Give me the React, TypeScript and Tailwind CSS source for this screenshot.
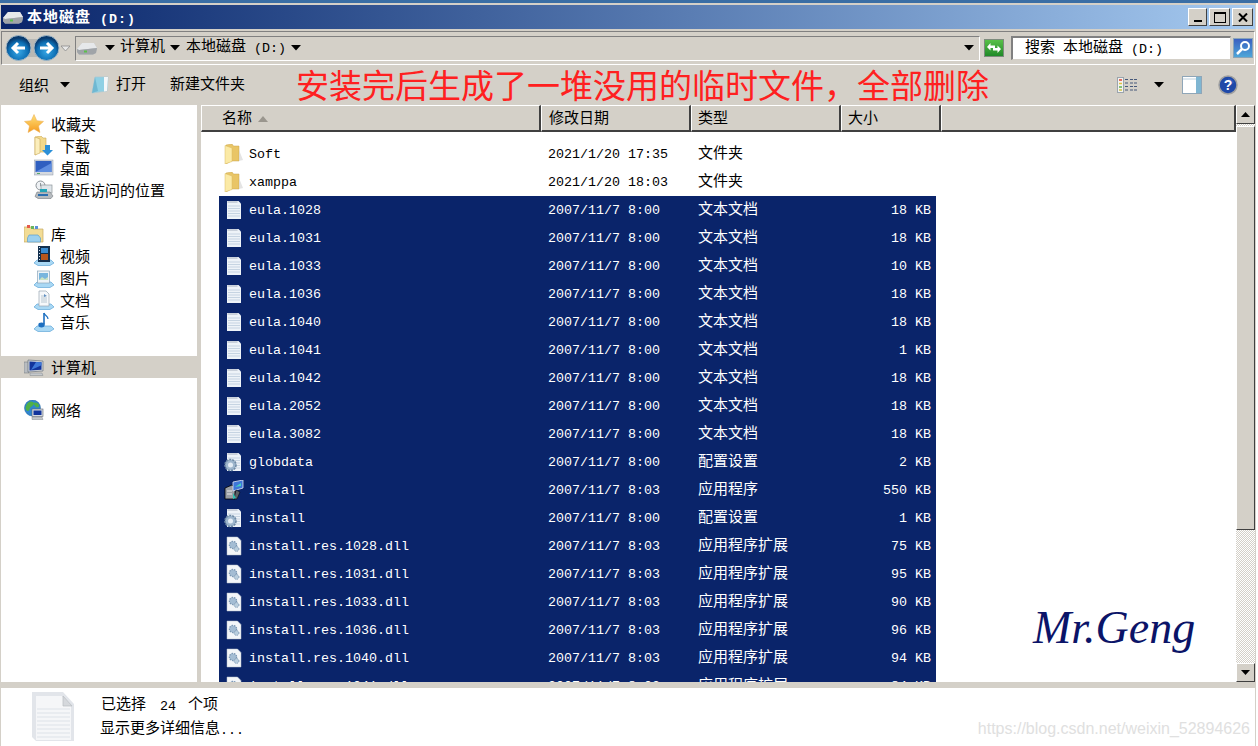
import type { ReactNode } from 'react';

const bevel = 'border border-t-white border-l-white border-r-[#404040] border-b-[#404040] bg-[#d4d0c8]';
const dither = 'bg-[repeating-conic-gradient(#d4d0c8_0_25%,#ffffff_0_50%)] bg-[length:2px_2px]';

// CJK runs sit at 15px, Latin at the mono size of the root, like the old system font
function T({ s }: { s: string }) {
  return (
    <>
      {s
        .split(/([\u3000-\u9fff\uff00-\uffef]+)/)
        .filter(Boolean)
        .map((part, i) =>
          /[\u3000-\u9fff\uff00-\uffef]/.test(part) ? (
            <span key={i} className="inline-block -translate-y-px text-[15px] leading-none font-['Noto_Sans_CJK_SC',sans-serif]">
              {part}
            </span>
          ) : (
            <span key={i}>{part}</span>
          ),
        )}
    </>
  );
}

function Caret({ className = '' }: { className?: string }) {
  return (
    <svg width="10" height="6" viewBox="0 0 10 6" className={`shrink-0 ${className}`}>
      <path d="M0 0h10L5 5.500z" fill="#000" />
    </svg>
  );
}

function Drive({ w = 20 }: { w?: number }) {
  return (
    <svg width={w} height={w * 0.65} viewBox="0 0 20 13" className="shrink-0">
      <path d="M5 1h12l3 5-1 5-3 1.500H2L0 10V7z" fill="#b9bcbf" />
      <path d="M5 1h12l3 5L2 8 0 7z" fill="#e6e8ea" />
      <path d="M0 7l2 1 18-2-1 5-3 1.500H2L0 10z" fill="#a0a4a8" />
      <rect x="7" y="8.500" width="3" height="2" fill="#5cc04a" />
    </svg>
  );
}

function NavButtons() {
  return (
    <svg width="66" height="28" viewBox="0 0 66 28" className="shrink-0">
      <defs>
        <radialGradient id="nav" cx="50%" cy="65%" r="55%">
          <stop offset="0" stopColor="#37a7e6" />
          <stop offset="0.7" stopColor="#0d6fb4" />
          <stop offset="1" stopColor="#083a6e" />
        </radialGradient>
      </defs>
      <rect x="12" y="5" width="34" height="18" fill="#b8b8b4" />
      <circle cx="13.500" cy="14" r="12.500" fill="url(#nav)" stroke="#9fb6c6" />
      <circle cx="41.500" cy="14" r="12.500" fill="url(#nav)" stroke="#9fb6c6" />
      <path d="M20 14H8M13 9l-5 5 5 5" fill="none" stroke="#fff" strokeWidth="3" />
      <path d="M35 14h12M42 9l5 5-5 5" fill="none" stroke="#fff" strokeWidth="3" />
      <path d="M56 12h9l-4.500 5z" fill="#e8e8e8" stroke="#8a8a8a" strokeWidth="0.8" />
    </svg>
  );
}

function Tray() {
  return <path d="M3 14h14l3 3-4 2.500H4L0 17z" fill="#a9d8f4" stroke="#62a8d8" strokeWidth="0.7" />;
}

function NavIcon({ name }: { name: string }) {
  return (
    <svg width="20" height="20" viewBox="0 0 20 20" className="shrink-0">
      {name === 'star' && (
        <>
          <defs>
            <linearGradient id="star" x1="0" y1="0" x2="0" y2="1">
              <stop offset="0" stopColor="#ffe27a" />
              <stop offset="1" stopColor="#f59a1e" />
            </linearGradient>
          </defs>
          <path d="M10 0.500l2.800 6.200 6.700.7-5 4.500 1.400 6.600L10 15l-5.900 3.500 1.400-6.600-5-4.500 6.700-.7z" fill="url(#star)" stroke="#e9a94a" strokeWidth="0.5" />
        </>
      )}
      {name === 'download' && (
        <>
          <path d="M1 1l6-1 2 2h3v14H5l-4 3z" fill="#f3d98b" stroke="#c9a858" strokeWidth="0.6" />
          <path d="M1 1l5 2v14l-5 2z" fill="#fbeebc" stroke="#c9a858" strokeWidth="0.6" />
          <path d="M11 9h5v5h3l-5.500 5.500L8 14h3z" fill="#2b8fd8" />
        </>
      )}
      {name === 'desktop' && (
        <>
          <rect x="0" y="2" width="19" height="15" fill="#d5d9df" stroke="#8d98a8" strokeWidth="0.5" />
          <rect x="1.500" y="3" width="16" height="11" fill="#2f5fc0" />
          <path d="M1.500 14L17.500 5v9z" fill="#5f8ee0" />
          <rect x="3" y="15" width="3" height="1" fill="#5cab6a" />
        </>
      )}
      {name === 'recent' && (
        <>
          <circle cx="6.500" cy="5.500" r="4.500" fill="#eef1f4" stroke="#8d9499" />
          <path d="M6.500 3v3h2.500" fill="none" stroke="#7a8186" strokeWidth="0.8" />
          <rect x="7" y="5" width="11" height="8" fill="#dfe5ea" stroke="#8d9499" strokeWidth="0.7" />
          <path d="M3 12h13l3 4-2 2.500H4l-3-2z" fill="#b6bbbf" stroke="#74797d" strokeWidth="0.6" />
          <path d="M6 9h7v3H6z" fill="#23a6b8" />
          <path d="M4 14h10v2H4z" fill="#2b6fb0" />
        </>
      )}
      {name === 'library' && (
        <>
          <path d="M0 3h7l2 2h10v13H0z" fill="#f2dc95" stroke="#c6ab62" strokeWidth="0.7" />
          <rect x="3" y="1" width="3" height="3" fill="#e65a4a" />
          <rect x="7" y="2" width="3" height="3" fill="#68b45c" />
          <rect x="11" y="2" width="3" height="3" fill="#5b8fd8" />
          <path d="M5 11h9l2.500 3v4h-13v-4z" fill="#9cd0ee" stroke="#5d9fcb" strokeWidth="0.7" />
        </>
      )}
      {name === 'video' && (
        <>
          <Tray />
          <rect x="4" y="0" width="12" height="16" fill="#13304f" />
          <rect x="7" y="2" width="7" height="5" fill="#3a8bd0" />
          <rect x="7" y="8" width="7" height="6" fill="#b8561c" />
          <path d="M5 1.500h1M5 4.500h1M5 7.500h1M5 10.500h1M5 13.500h1" stroke="#d7e5f0" strokeWidth="1.200" />
        </>
      )}
      {name === 'picture' && (
        <>
          <Tray />
          <rect x="3.500" y="3" width="12" height="12" fill="#eef4f8" stroke="#8ba6bb" strokeWidth="0.7" />
          <rect x="5" y="5" width="9" height="7" fill="#79b6de" />
          <path d="M5 12l3-3 3 2 3-2v3z" fill="#cbe3c3" />
        </>
      )}
      {name === 'document' && (
        <>
          <Tray />
          <path d="M5 1h7l3 3v12H5z" fill="#f6f8fa" stroke="#98a7b3" strokeWidth="0.7" />
          <path d="M7 6h3M7 8h6M7 10h6M7 12h6" stroke="#a9bac7" strokeWidth="0.8" />
          <path d="M10 4l3 2-3 1z" fill="#5f8ec0" />
        </>
      )}
      {name === 'music' && (
        <>
          <Tray />
          <path d="M10 1v11.500" stroke="#1d6fc0" strokeWidth="1.600" fill="none" />
          <path d="M10 1c1 3 4 3 4 6" stroke="#1d6fc0" strokeWidth="1.200" fill="none" />
          <ellipse cx="7.500" cy="13" rx="3.200" ry="2.400" fill="#1d6fc0" />
        </>
      )}
      {name === 'computer' && (
        <>
          <rect x="0" y="5" width="5" height="11" fill="#b8bcc0" stroke="#6d7378" strokeWidth="0.5" />
          <path d="M4 3l15 1v10l-15 1z" fill="#cfd4da" stroke="#5c6470" strokeWidth="0.6" />
          <path d="M5.500 4.500l12 .7v7.600l-12 .7z" fill="#12349c" />
          <path d="M7 13l5-8 5.500.3v3z" fill="#3f78d8" />
          <path d="M6 16h12l1 2.500H6z" fill="#c4c8cc" stroke="#858a8f" strokeWidth="0.5" />
        </>
      )}
      {name === 'network' && (
        <>
          <circle cx="8.500" cy="8" r="8" fill="#2f86cf" stroke="#1f5f9c" strokeWidth="0.5" />
          <path d="M2 6c2-5 5-5 7-4s0 4-2 5-1 4-3 4-3-3-2-5zM10 3c2-1 4 0 5 2s-2 3-3 2-3-3-2-4z" fill="#4fb048" />
          <rect x="8" y="9" width="11" height="7.500" fill="#d6dae0" stroke="#5c6470" strokeWidth="0.6" />
          <rect x="9.500" y="10.500" width="8" height="4.500" fill="#12349c" />
          <path d="M8 17h10l1 2.500H8z" fill="#c4c8cc" stroke="#858a8f" strokeWidth="0.5" />
        </>
      )}
    </svg>
  );
}

function FileIcon({ kind }: { kind: string }) {
  return (
    <svg width="20" height="20" viewBox="0 0 20 20" className="shrink-0">
      {kind === 'folder' && (
        <>
          <path d="M2 1l6-1 1.500 2H15v15H7l-5 3z" fill="#e9c566" stroke="#c9a44d" strokeWidth="0.5" />
          <path d="M1 1.500L8 4v13.500l-7 2.500z" fill="#fbeaa6" stroke="#d9bb63" strokeWidth="0.5" />
          <path d="M15 6l4 10-4 1z" fill="#d8d8d8" opacity="0.7" />
        </>
      )}
      {(kind === 'text' || kind === 'config') && (
        <>
          <path d="M3 1h11.500L17 3.500V19H3z" fill="#eef3f8" />
          <path d="M4 2h10M4 1v2M6 1v2M8 1v2M10 1v2M12 1v2" stroke="#a8b4c0" strokeWidth="0.6" />
          <path d="M4 6h12M4 8.500h12M4 11h12M4 13.500h12M4 16h12" stroke="#c6d4e2" strokeWidth="1.200" />
          {kind === 'config' && (
            <>
              <circle cx="6.500" cy="13" r="5.500" fill="#9db6cd" stroke="#6f8aa5" strokeWidth="1.600" strokeDasharray="2 1" />
              <circle cx="6.500" cy="13" r="2.500" fill="#e4edf5" />
            </>
          )}
        </>
      )}
      {kind === 'app' && (
        <>
          <path d="M1 8l7-3 3 3v11H1z" fill="#9a9ea4" stroke="#000" strokeWidth="0.8" />
          <path d="M3 11h5M3 14h5" stroke="#e8e8e8" strokeWidth="1" />
          <path d="M9 2l10-2v8l-10 3z" fill="#3f76d8" stroke="#dfe4f5" strokeWidth="0.8" />
          <path d="M11 7l6-4v3z" fill="#45d0c0" />
          <path d="M12 10l4 2-3 7h-3z" fill="#5d6168" stroke="#000" strokeWidth="0.5" />
          <path d="M9 13l3 5-3 1z" fill="#30c0b0" />
        </>
      )}
      {kind === 'dll' && (
        <>
          <path d="M3 1h10.500L17 4.500V19H3z" fill="#f3f6f9" stroke="#b5bec8" strokeWidth="0.5" />
          <circle cx="9" cy="9" r="3.600" fill="#a4bdd4" stroke="#7b97b3" strokeWidth="1.300" strokeDasharray="1.500 1" />
          <circle cx="12.500" cy="13" r="2.400" fill="#b9cede" stroke="#7b97b3" strokeWidth="1" strokeDasharray="1 0.800" />
        </>
      )}
    </svg>
  );
}

type FileRow = { name: string; date: string; type: string; size: string; kind: string; selected?: boolean };

const eulaSizes: [string, string][] = [
  ['1028', '18'], ['1031', '18'], ['1033', '10'], ['1036', '18'], ['1040', '18'],
  ['1041', '1'], ['1042', '18'], ['2052', '18'], ['3082', '18'],
];
const dllSizes: [string, string][] = [['1028', '75'], ['1031', '95'], ['1033', '90'], ['1036', '96'], ['1040', '94'], ['1041', '84']];

const files: FileRow[] = [
  { name: 'Soft', date: '2021/1/20 17:35', type: '文件夹', size: '', kind: 'folder' },
  { name: 'xamppa', date: '2021/1/20 18:03', type: '文件夹', size: '', kind: 'folder' },
  ...eulaSizes.map(([id, size]) => ({ name: `eula.${id}`, date: '2007/11/7 8:00', type: '文本文档', size: `${size} KB`, kind: 'text', selected: true })),
  { name: 'globdata', date: '2007/11/7 8:00', type: '配置设置', size: '2 KB', kind: 'config', selected: true },
  { name: 'install', date: '2007/11/7 8:03', type: '应用程序', size: '550 KB', kind: 'app', selected: true },
  { name: 'install', date: '2007/11/7 8:00', type: '配置设置', size: '1 KB', kind: 'config', selected: true },
  ...dllSizes.map(([id, size]) => ({ name: `install.res.${id}.dll`, date: '2007/11/7 8:03', type: '应用程序扩展', size: `${size} KB`, kind: 'dll', selected: true })),
];

function NavRow({ icon, label, child, active }: { icon: string; label: string; child?: boolean; active?: boolean }) {
  return (
    <div className={`flex h-[22px] items-center ${child ? 'pl-[33px] gap-[6px]' : 'pl-[23px] gap-[7px]'} ${active ? 'bg-[#d4d0c8]' : ''}`}>
      <NavIcon name={icon} />
      <T s={label} />
    </div>
  );
}

function HeaderCell({ width, children }: { width: string; children?: ReactNode }) {
  return (
    <div className={`${width} flex h-full shrink-0 items-center border-t border-l border-t-white border-l-white border-r-2 border-b-2 border-r-[#404040] border-b-[#404040] pt-[2px]`}>
      {children}
    </div>
  );
}

function WinButton({ children, className = '' }: { children: ReactNode; className?: string }) {
  return <div className={`${bevel} ${className} flex h-[18px] items-center justify-center`}>{children}</div>;
}

function ScrollButton({ up }: { up?: boolean }) {
  return (
    <div className={`${bevel} flex h-[19px] shrink-0 items-center justify-center`}>
      <svg width="9" height="5" viewBox="0 0 9 5">
        <path d={up ? 'M0 5h9L4.500 0z' : 'M0 0h9L4.500 5z'} fill="#000" />
      </svg>
    </div>
  );
}

export default function App() {
  return (
    <div className="flex h-[746px] w-[1258px] flex-col overflow-hidden bg-white text-[13.33px] leading-none text-black font-['Liberation_Mono','Noto_Sans_CJK_SC',monospace]">
      <div className="h-[3px] shrink-0 bg-[#3a6ea5]" />
      <div className="mr-[2px] flex min-h-0 flex-1 flex-col border-l border-r border-[#d4d0c8] bg-[#d4d0c8]">
        {/* title bar */}
        <div className="mt-[2px] flex h-[24px] shrink-0 items-center bg-gradient-to-r from-[#0a246a] to-[#a6caf0] px-[2px] font-bold text-white">
          <Drive />
          <div className="ml-[4px] pt-[2px] tracking-[1px] whitespace-pre">
            <T s="本地磁盘 (D:)" />
          </div>
          <div className="ml-auto flex gap-[2px]">
            <WinButton className="w-[19px] items-end pb-[3px]">
              <div className="h-[2px] w-[8px] bg-black" />
            </WinButton>
            <WinButton className="w-[21px]">
              <div className="h-[11px] w-[12px] border border-t-2 border-black" />
            </WinButton>
            <WinButton className="w-[21px]">
              <svg width="10" height="9" viewBox="0 0 10 9">
                <path d="M1 .5l8 8M9 .5l-8 8" stroke="#000" strokeWidth="2" />
              </svg>
            </WinButton>
          </div>
        </div>

        {/* address row */}
        <div className="mt-[2px] flex h-[34px] shrink-0 items-center border border-t-[#808080] border-b-white border-l-[#808080] border-r-white pl-[3px] whitespace-pre">
          <NavButtons />
          <div className="ml-[4px] flex h-[25px] w-[905px] shrink-0 items-center border border-t-[#808080] border-l-[#808080] border-b-white border-r-white pl-[1px]">
            <Drive />
            <Caret className="ml-[8px]" />
            <div className="ml-[5px] -translate-y-px"><T s="计算机" /></div>
            <Caret className="ml-[5px]" />
            <div className="ml-[6px] -translate-y-px"><T s="本地磁盘 (D:)" /></div>
            <Caret className="ml-[5px]" />
            <Caret className="mr-[5px] ml-auto" />
          </div>
          <div className="ml-[4px] flex h-[18px] w-[20px] shrink-0 items-center justify-center border border-[#7d8b7d] bg-gradient-to-b from-[#58c048] to-[#1e8a28]">
            <svg width="16" height="14" viewBox="0 0 16 14">
              <path d="M1 6l3.500-4v2.500H9V7H4.500v2.500z" fill="#fff" />
              <path d="M15 8l-3.500 4V9.500H7V7h4.500V4.500z" fill="#fff" />
            </svg>
          </div>
          <div className="ml-[7px] flex h-[24px] w-[220px] shrink-0 items-center border-t-2 border-r border-b border-l-2 border-t-[#808080] border-r-[#d4d0c8] border-b-[#d4d0c8] border-l-[#808080] bg-white pl-[12px]">
            <div className="-translate-y-px"><T s="搜索 本地磁盘 (D:)" /></div>
          </div>
          <div className="ml-[2px] flex h-[20px] w-[20px] shrink-0 items-center justify-center border border-[#8aa4b8] bg-gradient-to-b from-[#3a5fc0] to-[#4ea6d8]">
            <svg width="16" height="16" viewBox="0 0 16 16">
              <circle cx="10" cy="6" r="4" fill="none" stroke="#fff" strokeWidth="2" />
              <path d="M7 9l-5 5" stroke="#fff" strokeWidth="2.500" />
            </svg>
          </div>
        </div>

        {/* toolbar */}
        <div className="flex h-[40px] shrink-0 items-center pl-[18px]">
          <T s="组织" />
          <Caret className="ml-[11px]" />
          <svg width="20" height="20" viewBox="0 0 20 20" className="ml-[20px] shrink-0">
            <path d="M5 2h13l-1 14-15 2z" fill="#8fd0e4" stroke="#a8c8d4" strokeWidth="0.7" />
            <path d="M14 2l4 0-1 14-3 .5z" fill="#f4f7f9" />
            <path d="M5 2l-3 16 6-2z" fill="#5aa8c6" opacity="0.6" />
          </svg>
          <div className="ml-[6px]"><T s="打开" /></div>
          <div className="ml-[24px]"><T s="新建文件夹" /></div>
          <div className="ml-[51px] pb-[2px] font-['Noto_Sans_CJK_SC',sans-serif] text-[33px] leading-none text-[#ff2020]">
            安装完后生成了一堆没用的临时文件，全部删除
          </div>
          <div className="ml-auto flex items-center pr-[17px]">
            <svg width="20" height="16" viewBox="0 0 20 16">
              <rect x=".5" y=".5" width="6" height="15" fill="#f4f4f0" stroke="#9aa4ae" />
              <path d="M2 3h3" stroke="#d84030" strokeWidth="1.500" />
              <path d="M2 6.500h3" stroke="#e0c040" strokeWidth="1.500" />
              <path d="M2 10h3" stroke="#60b050" strokeWidth="1.500" />
              <path d="M2 13h3" stroke="#d0c040" strokeWidth="1.500" />
              <path d="M8 2.500h3M13 2.500h3M17 2.500h3M8 6h3M13 6h3M17 6h3M8 9.500h3M13 9.500h3M17 9.500h3M8 13h3M13 13h3M17 13h3" stroke="#47597a" />
            </svg>
            <Caret className="ml-[17px]" />
            <svg width="20" height="18" viewBox="0 0 20 18" className="ml-[18px]">
              <rect x=".5" y=".5" width="19" height="17" fill="#fff" stroke="#8fa6b8" />
              <rect x="14" y="1" width="5" height="16" fill="#7fb6d2" />
              <path d="M1 3h13" stroke="#bcd0de" />
            </svg>
            <svg width="20" height="20" viewBox="0 0 20 20" className="ml-[16px]">
              <circle cx="10" cy="10" r="9" fill="#1f49a8" stroke="#a0a0a0" strokeWidth="1.500" />
              <path d="M10 10V3.500A6 6 0 0 1 16 8z" fill="#3f6fd0" opacity="0.5" />
              <text x="10" y="15" textAnchor="middle" fontSize="14" fontWeight="700" fill="#fff" fontFamily="Liberation Sans, sans-serif">?</text>
            </svg>
          </div>
        </div>

        {/* body */}
        <div className="flex min-h-0 flex-1">
          <div className="w-[196px] shrink-0 overflow-hidden bg-white pt-[8px]">
            <NavRow icon="star" label="收藏夹" />
            <NavRow icon="download" label="下载" child />
            <NavRow icon="desktop" label="桌面" child />
            <NavRow icon="recent" label="最近访问的位置" child />
            <div className="h-[22px]" />
            <NavRow icon="library" label="库" />
            <NavRow icon="video" label="视频" child />
            <NavRow icon="picture" label="图片" child />
            <NavRow icon="document" label="文档" child />
            <NavRow icon="music" label="音乐" child />
            <div className="h-[23px]" />
            <NavRow icon="computer" label="计算机" active />
            <div className="h-[21px]" />
            <NavRow icon="network" label="网络" />
          </div>

          <div className="relative ml-[4px] flex min-w-0 flex-1 bg-white">
            <div className="flex min-w-0 flex-1 flex-col">
              <div className="flex h-[27px] shrink-0 bg-[#d4d0c8]">
                <HeaderCell width="w-[340px]">
                  <div className="ml-[20px]"><T s="名称" /></div>
                  <svg width="10" height="6" viewBox="0 0 10 6" className="ml-[6px]">
                    <path d="M0 6h10L5 0z" fill="#9a968e" />
                  </svg>
                </HeaderCell>
                <HeaderCell width="w-[150px]"><div className="ml-[7px]"><T s="修改日期" /></div></HeaderCell>
                <HeaderCell width="w-[150px]"><div className="ml-[6px]"><T s="类型" /></div></HeaderCell>
                <HeaderCell width="w-[100px]"><div className="ml-[6px]"><T s="大小" /></div></HeaderCell>
                <HeaderCell width="flex-1" />
              </div>
              <div className="min-h-0 flex-1 overflow-hidden pt-[8px] pl-[18px]">
                {files.map((file, i) => (
                  <div
                    key={i}
                    className={`flex h-[28px] w-[717px] items-center ${file.selected ? 'bg-[#0a246a] text-white' : ''}`}
                  >
                    <div className="flex w-[329px] shrink-0 items-center pl-[5px]">
                      <FileIcon kind={file.kind} />
                      <span className="ml-[5px] pt-[2px]">{file.name}</span>
                    </div>
                    <div className="w-[150px] shrink-0 pt-[2px]">{file.date}</div>
                    <div className="w-[150px] shrink-0"><T s={file.type} /></div>
                    <div className="w-[83px] shrink-0 pt-[2px] text-right">{file.size}</div>
                  </div>
                ))}
              </div>
            </div>

            <div className="flex w-[19px] shrink-0 flex-col">
              <ScrollButton up />
              <div className={`h-[2px] shrink-0 ${dither}`} />
              <div className={`${bevel} h-[404px] shrink-0`} />
              <div className={`min-h-0 flex-1 ${dither}`} />
              <ScrollButton />
            </div>

            <div className="absolute top-[500px] left-[832px] font-['Liberation_Serif',serif] text-[46px] leading-none whitespace-nowrap text-[#0b1468] italic">
              Mr.Geng
            </div>
          </div>
        </div>

        {/* details pane */}
        <div className="mt-[6px] flex h-[58px] shrink-0 items-center bg-white pl-[30px]">
          <svg width="44" height="52" viewBox="0 0 44 52" className="shrink-0">
            <path d="M1 1h31l11 12v37H5l-4-4z" fill="#e2e5ea" />
            <path d="M5 5h26l9 10v34H5z" fill="#f5f6f8" />
            <path d="M6 18h33M6 22h33M6 26h33M6 30h33M6 34h33M6 38h33M6 42h33M6 46h33" stroke="#dde2e8" />
            <path d="M32 5v10h9z" fill="#d5d8dc" stroke="#b9bdc2" strokeWidth="0.7" />
          </svg>
          <div className="mb-[4px] ml-[25px] flex flex-col gap-[9px] whitespace-pre">
            <div className="h-[15px] pl-[1px]">
              <T s="已选择" />
              <span className="ml-[14px]">24</span>
              <span className="ml-[12px]"><T s="个项" /></span>
            </div>
            <div className="h-[15px]">
              <T s="显示更多详细信息..." />
            </div>
          </div>
          <div className="ml-auto self-end pr-[5px] pb-[9px] font-['Liberation_Sans',sans-serif] text-[16px] leading-none text-[#e0e0e0]">
            https://blog.csdn.net/weixin_52894626
          </div>
        </div>
      </div>
    </div>
  );
}
